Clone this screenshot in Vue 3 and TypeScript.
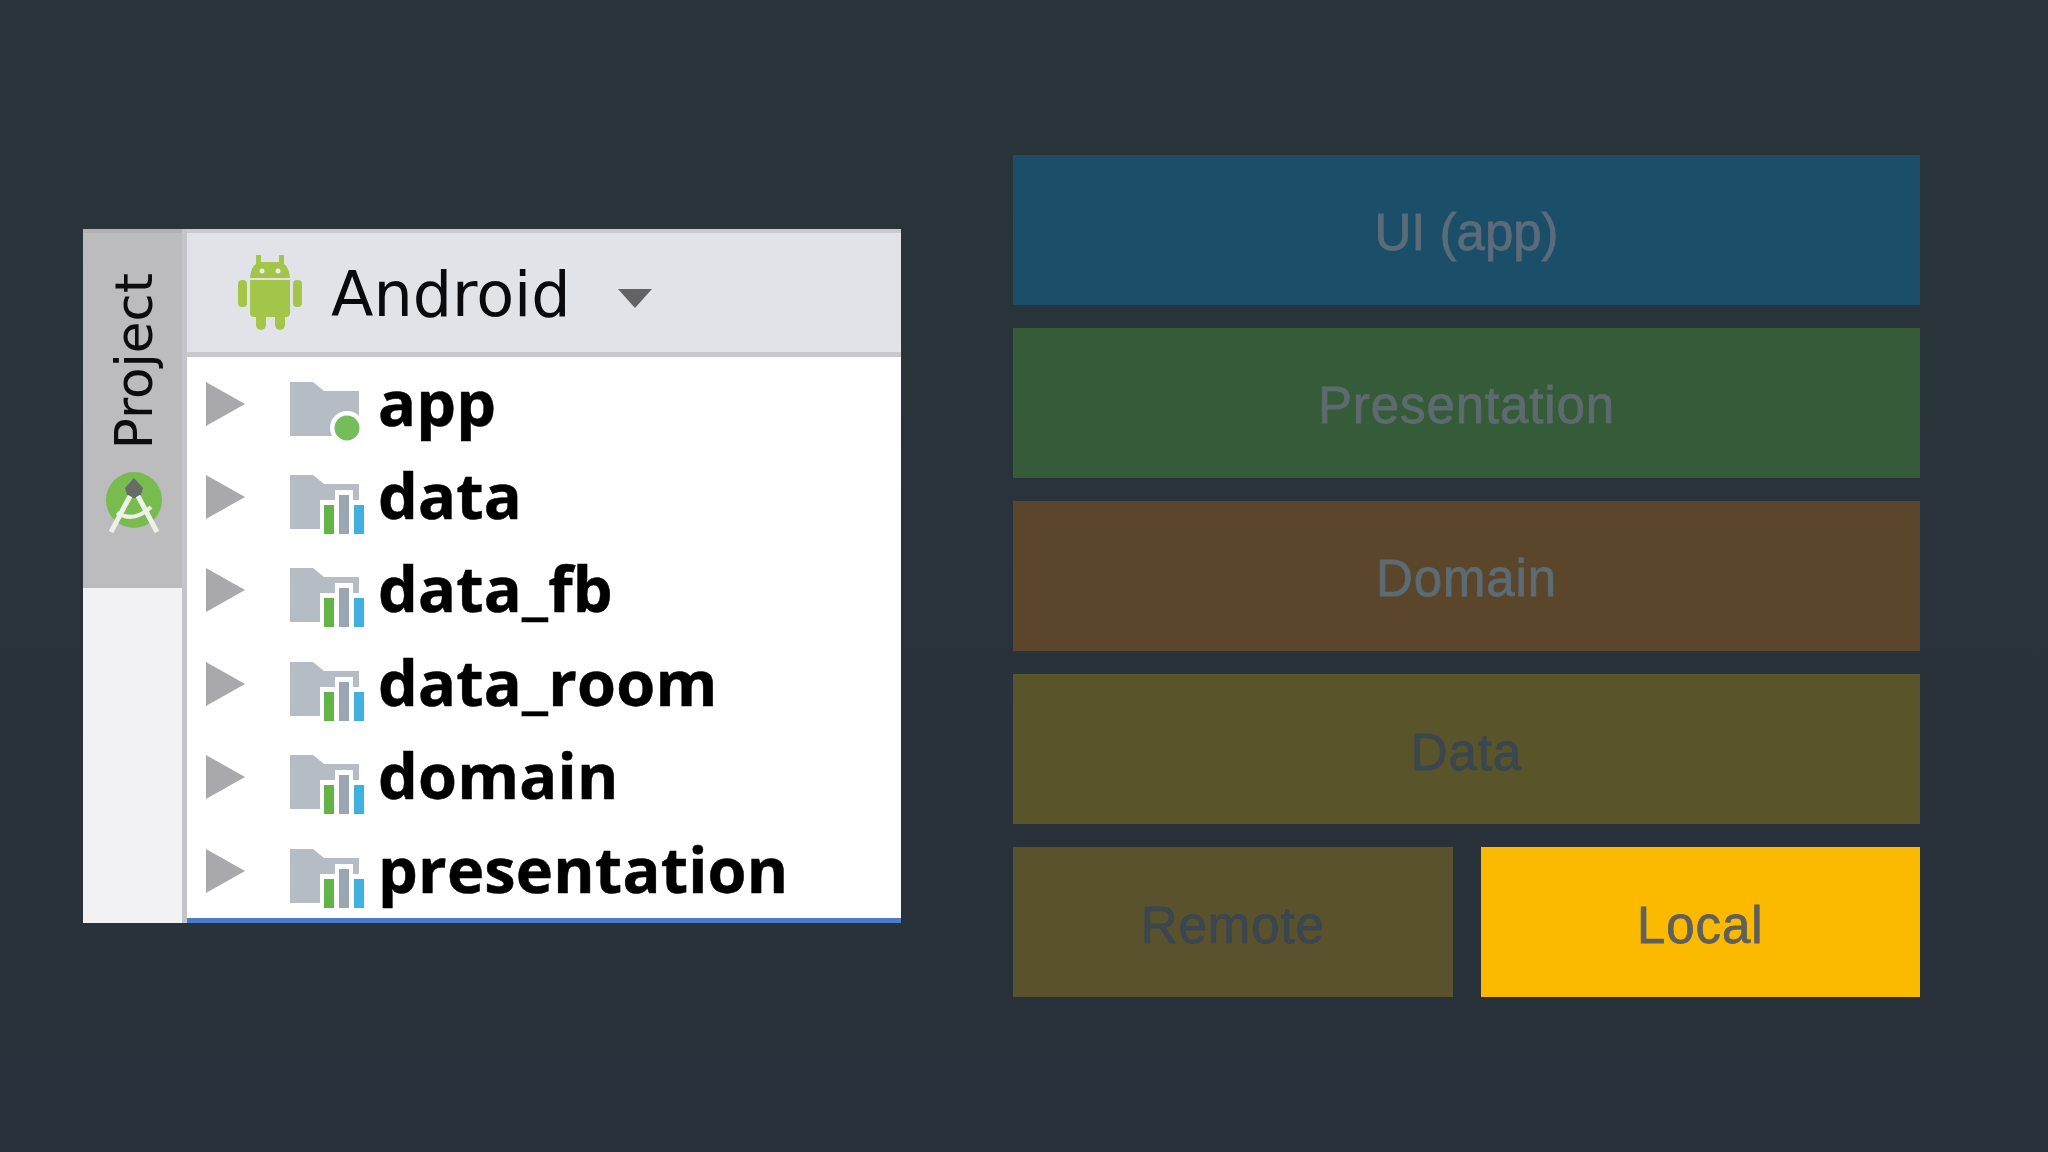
<script setup lang="ts">
interface Row { name: string; kind: 'app' | 'lib' }
const rows: Row[] = [
  { name: 'app', kind: 'app' },
  { name: 'data', kind: 'lib' },
  { name: 'data_fb', kind: 'lib' },
  { name: 'data_room', kind: 'lib' },
  { name: 'domain', kind: 'lib' },
  { name: 'presentation', kind: 'lib' },
]
const bands = [
  { label: 'UI (app)', cls: 'ui' },
  { label: 'Presentation', cls: 'presentation' },
  { label: 'Domain', cls: 'domain' },
  { label: 'Data', cls: 'data' },
]
</script>

<template>
  <div class="page">
    <section class="panel">
      <aside class="rail">
        <div class="rail-tab">
          <span class="rail-label">Project</span>
          <svg class="studio" viewBox="0 0 64 70" width="64" height="70">
            <circle cx="32" cy="30" r="28" fill="#78bc50" />
            <path d="M32 8 L41 18 L38 28 L26 28 L23 18 Z" fill="#666c66" />
            <path d="M28 26 L9 62 M36 26 L55 62" stroke="#eef0ea" stroke-width="5" fill="none" />
            <path d="M15 43 Q32 53 49 37" stroke="#eef0ea" stroke-width="4" fill="none" />
          </svg>
        </div>
      </aside>
      <div class="main">
        <header class="head">
          <svg class="robot" viewBox="0 0 64 75" width="64" height="75">
            <g fill="#a3c64a">
              <rect x="0" y="25" width="9" height="27" rx="4" />
              <rect x="55" y="25" width="9" height="27" rx="4" />
              <path d="M12 25 H52 V58 Q52 62 48 62 H16 Q12 62 12 58 Z" />
              <rect x="18" y="55" width="10" height="20" rx="5" />
              <rect x="37" y="55" width="10" height="20" rx="5" />
              <path d="M12 23 Q13 12 18 9 V0 H23 V7 H41 V0 H46 V9 Q51 12 52 23 Z" />
            </g>
            <circle cx="24" cy="16" r="2.5" fill="#eef1e4" />
            <circle cx="40" cy="16" r="2.5" fill="#eef1e4" />
          </svg>
          <span class="head-title">Android</span>
          <svg class="caret" viewBox="0 0 34 19" width="34" height="19">
            <path d="M0 0 H34 L17 19 Z" fill="#636365" />
          </svg>
        </header>
        <ul class="tree">
          <li v-for="row in rows" :key="row.name" class="row">
            <svg class="arrow" viewBox="0 0 39 44" width="39" height="44">
              <path d="M0 0 L39 22 L0 44 Z" fill="#a9a8ac" />
            </svg>
            <svg class="folder" viewBox="0 -18 80 80" width="80" height="80">
              <path d="M0 0 H23 L34 9 H69 V54 H0 Z" fill="#b6bcc4" />
              <template v-if="row.kind === 'app'">
                <circle cx="57" cy="46" r="17" fill="#fff" />
                <circle cx="57" cy="46" r="12.5" fill="#73bd5b" />
              </template>
              <template v-else>
                <rect x="30" y="25" width="19" height="35" fill="#fff" />
                <rect x="45" y="15" width="18" height="45" fill="#fff" />
                <rect x="60" y="25" width="18" height="35" fill="#fff" />
                <rect x="34" y="30" width="10" height="29" fill="#62b348" />
                <rect x="49" y="20" width="10" height="39" fill="#9aa7b3" />
                <rect x="64" y="30" width="10" height="29" fill="#40b0de" />
              </template>
            </svg>
            <span class="row-name">{{ row.name }}</span>
          </li>
        </ul>
      </div>
    </section>

    <section class="stack">
      <div v-for="band in bands" :key="band.cls" class="band" :class="band.cls">{{ band.label }}</div>
      <div class="split">
        <div class="band remote">Remote</div>
        <div class="band local">Local</div>
      </div>
    </section>
  </div>
</template>

<style>
html, body { margin: 0; background: #29323b; }
</style>

<style scoped>
.page {
  width: 2048px;
  height: 1152px;
  box-sizing: border-box;
  padding-left: 83px;
  display: flex;
  align-items: center;
  gap: 112px;
  background: linear-gradient(180deg, #29343a 0%, #29313c 100%);
}
.panel {
  width: 818px;
  height: 694px;
  display: flex;
  flex: none;
  background: #fff;
}
.rail {
  width: 104px;
  box-sizing: border-box;
  flex: none;
  background: #f2f1f3;
  border-right: 5px solid #c5c4c8;
}
.rail-tab {
  height: 359px;
  box-sizing: border-box;
  border-top: 4px solid #b0b0b5;
  background: #bcbbbd;
  display: flex;
  flex-direction: column;
  align-items: center;
  padding-top: 40px;
}
.rail-label {
  margin-left: 3px;
  writing-mode: vertical-rl;
  transform: rotate(180deg);
  font: 51.5px/50px "DejaVu Sans", sans-serif;
  color: #0c0c0e;
}
.studio { margin-top: 21px; margin-left: 3px; flex: none; }
.main {
  flex: 1;
  display: flex;
  flex-direction: column;
  min-width: 0;
}
.head {
  height: 128px;
  box-sizing: border-box;
  border-top: 4px solid #c8cad0;
  border-bottom: 5px solid #c9c9cc;
  background: #e1e3e8;
  padding-left: 51px;
  display: flex;
  align-items: center;
}
.robot { flex: none; }
.head-title {
  margin-left: 29px;
  padding-top: 5px;
  font: 62px/1 "DejaVu Sans", sans-serif;
  color: #0a0a0e;
}
.caret { margin-left: 47px; margin-top: 11px; flex: none; }
.tree {
  list-style: none;
  margin: 0;
  padding: 0;
  flex: 1;
  border-bottom: 5px solid #4a7cc9;
}
.row {
  height: 93.4px;
  padding-left: 19px;
  display: flex;
  align-items: center;
}
.arrow { flex: none; }
.folder { flex: none; margin-left: 45px; }
.row-name {
  margin-left: 8px;
  padding-bottom: 5px;
  font: 700 63px/1 "Open Sans", sans-serif;
  letter-spacing: 0.2px;
  color: #000;
  -webkit-text-stroke: 0.5px #000;
}
.stack {
  width: 907px;
  flex: none;
  display: flex;
  flex-direction: column;
  gap: 23px;
}
.split {
  display: flex;
  gap: 28px;
}
.band {
  height: 150px;
  box-sizing: border-box;
  padding-top: 4px;
  display: flex;
  align-items: center;
  justify-content: center;
  font: 51px/1 "Liberation Sans", sans-serif;
  letter-spacing: 0.9px;
  -webkit-text-stroke: 0.8px currentColor;
}
.split .band { flex: 1; }
.ui { background: #1a4e69; color: #5c6b79; letter-spacing: 0; }
.presentation { background: #355b38; color: #5d6b70; }
.domain { background: #5b462b; color: #5c6b74; }
.data { background: #5a542a; color: #3a4650; padding-top: 6px; }
.remote { background: #59522d; color: #3a4650; padding-top: 6px; }
.local { background: #fbba00; color: #5f5f5c; padding-top: 6px; }
</style>
